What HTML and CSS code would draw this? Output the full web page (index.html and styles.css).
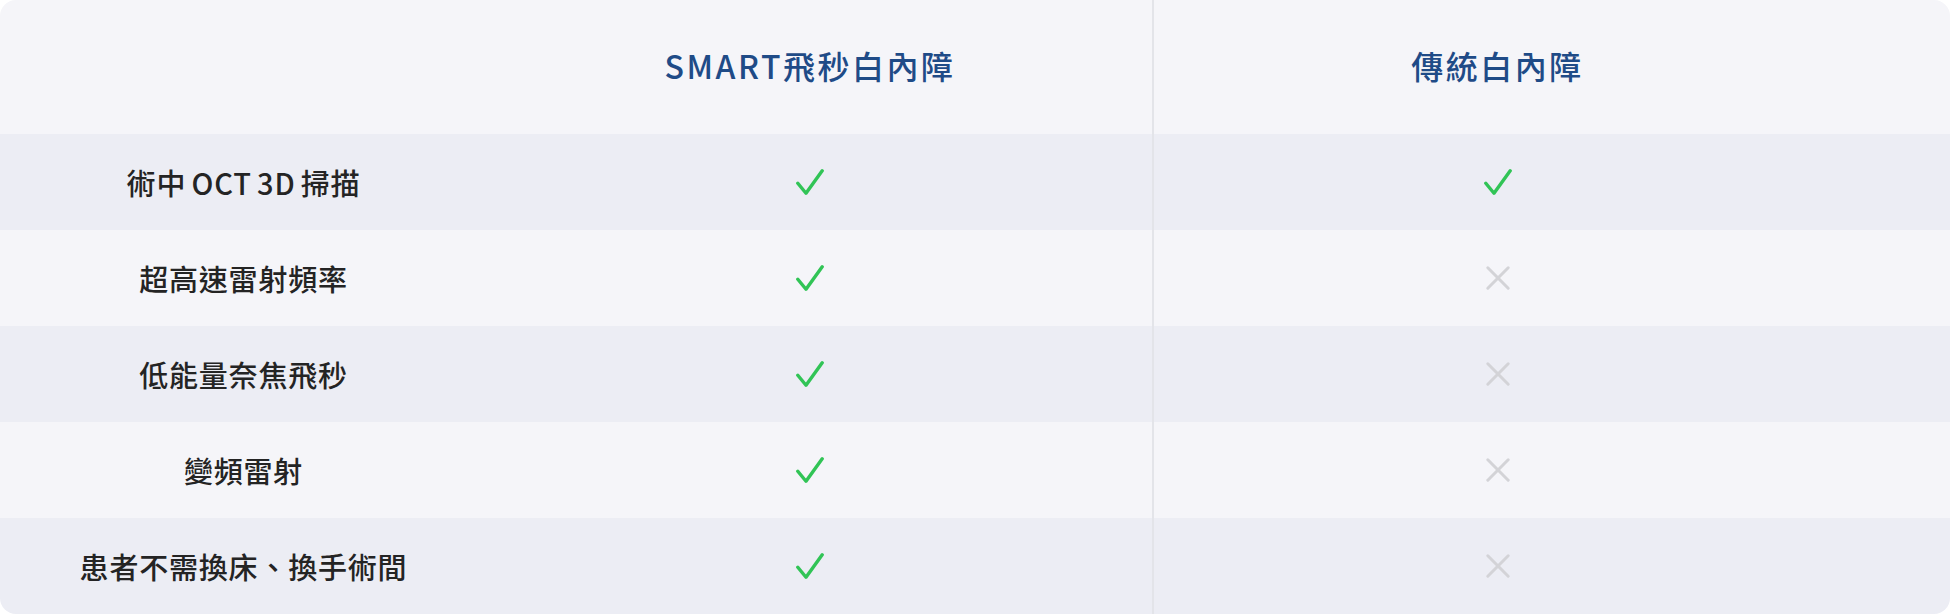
FILE: index.html
```html
<!DOCTYPE html>
<html lang="zh-Hant">
<head>
<meta charset="utf-8">
<title>SMART飛秒白內障 比較</title>
<link rel="stylesheet" href="styles.css">
</head>
<body>
<div class="table">
  <div class="row head">
    <div class="cell label"></div>
    <div class="cell c2"><span class="title">SMART飛秒白內障</span></div>
    <div class="cell c3"><span class="title">傳統白內障</span></div>
  </div>
  <div class="row odd">
    <div class="cell label">術中 OCT 3D 掃描</div>
    <div class="cell c2"><svg class="check" viewBox="0 0 28 28" width="28" height="28"><polyline points="1.8,15.2 10,25.3 26.2,2.8"/></svg></div>
    <div class="cell c3"><svg class="check" viewBox="0 0 28 28" width="28" height="28"><polyline points="1.8,15.2 10,25.3 26.2,2.8"/></svg></div>
  </div>
  <div class="row even">
    <div class="cell label">超高速雷射頻率</div>
    <div class="cell c2"><svg class="check" viewBox="0 0 28 28" width="28" height="28"><polyline points="1.8,15.2 10,25.3 26.2,2.8"/></svg></div>
    <div class="cell c3"><svg class="cross" viewBox="0 0 26 26" width="26" height="26"><line x1="2.8" y1="2.8" x2="23.2" y2="23.2"/><line x1="23.2" y1="2.8" x2="2.8" y2="23.2"/></svg></div>
  </div>
  <div class="row odd">
    <div class="cell label">低能量奈焦飛秒</div>
    <div class="cell c2"><svg class="check" viewBox="0 0 28 28" width="28" height="28"><polyline points="1.8,15.2 10,25.3 26.2,2.8"/></svg></div>
    <div class="cell c3"><svg class="cross" viewBox="0 0 26 26" width="26" height="26"><line x1="2.8" y1="2.8" x2="23.2" y2="23.2"/><line x1="23.2" y1="2.8" x2="2.8" y2="23.2"/></svg></div>
  </div>
  <div class="row even">
    <div class="cell label">變頻雷射</div>
    <div class="cell c2"><svg class="check" viewBox="0 0 28 28" width="28" height="28"><polyline points="1.8,15.2 10,25.3 26.2,2.8"/></svg></div>
    <div class="cell c3"><svg class="cross" viewBox="0 0 26 26" width="26" height="26"><line x1="2.8" y1="2.8" x2="23.2" y2="23.2"/><line x1="23.2" y1="2.8" x2="2.8" y2="23.2"/></svg></div>
  </div>
  <div class="row odd">
    <div class="cell label">患者不需換床、換手術間</div>
    <div class="cell c2"><svg class="check" viewBox="0 0 28 28" width="28" height="28"><polyline points="1.8,15.2 10,25.3 26.2,2.8"/></svg></div>
    <div class="cell c3"><svg class="cross" viewBox="0 0 26 26" width="26" height="26"><line x1="2.8" y1="2.8" x2="23.2" y2="23.2"/><line x1="23.2" y1="2.8" x2="2.8" y2="23.2"/></svg></div>
  </div>
</div>
</body>
</html>
```

FILE: styles.css
```css
html, body {
  margin: 0;
  padding: 0;
  background: #ffffff;
}

body {
  font-family: "Noto Sans CJK TC", "Noto Sans", sans-serif;
}

.table {
  width: 1950px;
  height: 614px;
  border-radius: 16px;
  overflow: hidden;
  display: flex;
  flex-direction: column;
}

.row {
  display: grid;
  grid-template-columns: 487px 665px 1fr;
  height: 96px;
}

.row.head {
  height: 134px;
  background: #f5f5f9;
}

.row.odd {
  background: #ecedf4;
}

.row.even {
  background: #f5f5f9;
}

.cell {
  display: flex;
  align-items: center;
  justify-content: center;
}

.c2 {
  padding-right: 19px;
}

.c3 {
  border-left: 2px solid #e3e4e9;
  padding-right: 109px;
}

.head .cell {
  padding-bottom: 4px;
}

.head .c2 {
  padding-right: 19px;
}

.head .c3 {
  padding-right: 109px;
}

.title {
  font-size: 32px;
  font-weight: 500;
  letter-spacing: 2.5px;
  color: #1f4b87;
  line-height: 1;
}

.label {
  font-size: 29px;
  font-weight: 500;
  letter-spacing: 0.8px;
  word-spacing: -2px;
  color: #242424;
}

.check polyline {
  fill: none;
  stroke: #31c456;
  stroke-width: 3.4;
  stroke-linecap: round;
  stroke-linejoin: round;
}

.cross line {
  stroke: #d3d3d7;
  stroke-width: 3;
  stroke-linecap: round;
}
```
